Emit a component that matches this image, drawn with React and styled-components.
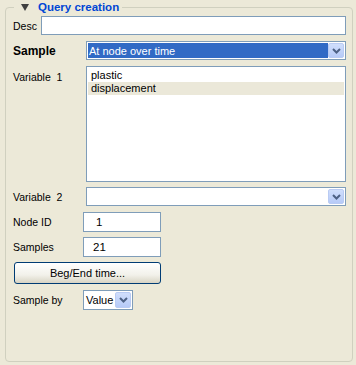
import React from "react";
import styled, { createGlobalStyle } from "styled-components";

const GlobalStyle = createGlobalStyle`
  html, body {
    margin: 0;
    background: #ece9d8;
  }
  body {
    font-family: "Liberation Sans", Arial, sans-serif;
    font-size: 11px;
    color: #000;
  }
`;

const Page = styled.div`
  width: 356px;
  height: 365px;
  background: #ece9d8;
  box-sizing: border-box;
`;

const Group = styled.fieldset`
  box-sizing: border-box;
  margin: 0 3px 0 5px;
  height: 362px;
  padding: 2px 6px 0 7px;
  border: 1px solid #d0d0bf;
  border-radius: 4px;
  display: flex;
  flex-direction: column;
`;

const Legend = styled.legend`
  margin-left: 1px;
  padding: 0 3px 0 7px;
  display: flex;
  align-items: center;
  gap: 9px;
  height: 14px;
  font-size: 11.5px;
  font-weight: bold;
  color: #0046d5;
  line-height: 14px;
`;

const Form = styled.div`
  display: flex;
  flex-direction: column;
`;

const Row = styled.div`
  display: flex;
  align-items: ${(p) => (p.$top ? "flex-start" : "center")};
  margin-top: ${(p) => p.$gap || 0}px;
`;

const Label = styled.div`
  width: ${(p) => p.$w}px;
  flex: none;
  font-weight: ${(p) => (p.$bold ? "bold" : "normal")};
  font-size: ${(p) => (p.$bold ? "12px" : "10.5px")};
  padding-top: ${(p) => p.$pt || 0}px;
  white-space: nowrap;
`;

const TextBox = styled.div`
  box-sizing: border-box;
  height: ${(p) => p.$h || 19}px;
  width: ${(p) => (p.$w ? `${p.$w}px` : "auto")};
  flex: ${(p) => (p.$w ? "none" : "1")};
  background: #fff;
  border: 1px solid #7f9db9;
  padding-left: ${(p) => p.$indent || 3}px;
  display: flex;
  align-items: center;
  font-size: 11.5px;
`;

const Combo = styled.div`
  box-sizing: border-box;
  height: ${(p) => p.$h || 19}px;
  width: ${(p) => (p.$w ? `${p.$w}px` : "auto")};
  flex: ${(p) => (p.$w ? "none" : "1")};
  background: #fff;
  border: 1px solid #7f9db9;
  display: flex;
  align-items: center;
  padding: 1px;
`;

const ComboText = styled.div`
  flex: 1;
  align-self: stretch;
  display: flex;
  align-items: center;
  padding-left: 1px;
  font-size: 11px;
  background: ${(p) => (p.$selected ? "#316ac5" : "transparent")};
  color: ${(p) => (p.$selected ? "#fff" : "#000")};
  white-space: nowrap;
  overflow: hidden;
`;

const DropButton = styled.div`
  box-sizing: border-box;
  width: 16px;
  align-self: stretch;
  flex: none;
  border: 1px solid #b9cbf3;
  border-radius: 2px;
  background: linear-gradient(#d0defc, #b6caf7);
  display: flex;
  align-items: center;
  justify-content: center;
`;

const List = styled.div`
  box-sizing: border-box;
  flex: 1;
  height: 116px;
  background: #fff;
  border: 1px solid #7f9db9;
  padding: 2px 1px;
  font-size: 11px;
`;

const ListItem = styled.div`
  height: 13px;
  line-height: 13px;
  padding-left: 3px;
  background: ${(p) => (p.$active ? "#ebe8d9" : "transparent")};
`;

const Button = styled.button`
  box-sizing: border-box;
  width: 147px;
  height: 22px;
  margin: 0 0 0 1px;
  border: 1px solid #003c74;
  border-radius: 3px;
  background: linear-gradient(#ffffff, #f2f1ea 60%, #d8d4c4);
  font-family: "Liberation Sans", Arial, sans-serif;
  font-size: 11px;
  color: #000;
  padding: 0;
`;

const Chevron = () => (
  <svg width="9" height="6" viewBox="0 0 9 6">
    <path d="M1 1 L4.5 4.5 L8 1" fill="none" stroke="#4d6185" strokeWidth="2" />
  </svg>
);

const Triangle = () => (
  <svg width="8" height="7" viewBox="0 0 8 7">
    <polygon points="0,0 8,0 4,7" fill="#404040" />
  </svg>
);

export default function App() {
  return (
    <Page>
      <GlobalStyle />
      <Group>
        <Legend>
          <Triangle />
          Query creation
        </Legend>
        <Form>
          <Row>
            <Label $w={28}>Desc</Label>
            <TextBox />
          </Row>
          <Row $gap={6}>
            <Label $w={73} $bold>
              Sample
            </Label>
            <Combo>
              <ComboText $selected>At node over time</ComboText>
              <DropButton>
                <Chevron />
              </DropButton>
            </Combo>
          </Row>
          <Row $gap={6} $top>
            <Label $w={73} $pt={5}>
              Variable&nbsp; 1
            </Label>
            <List>
              <ListItem>plastic</ListItem>
              <ListItem $active>displacement</ListItem>
            </List>
          </Row>
          <Row $gap={5}>
            <Label $w={73}>Variable&nbsp; 2</Label>
            <Combo>
              <ComboText />
              <DropButton>
                <Chevron />
              </DropButton>
            </Combo>
          </Row>
          <Row $gap={6}>
            <Label $w={70}>Node ID</Label>
            <TextBox $w={78} $h={20} $indent={12}>
              1
            </TextBox>
          </Row>
          <Row $gap={5}>
            <Label $w={70}>Samples</Label>
            <TextBox $w={78} $h={20} $indent={9}>
              21
            </TextBox>
          </Row>
          <Row $gap={5}>
            <Button>Beg/End time...</Button>
          </Row>
          <Row $gap={6}>
            <Label $w={70}>Sample by</Label>
            <Combo $w={50} $h={20}>
              <ComboText>Value</ComboText>
              <DropButton>
                <Chevron />
              </DropButton>
            </Combo>
          </Row>
        </Form>
      </Group>
    </Page>
  );
}
